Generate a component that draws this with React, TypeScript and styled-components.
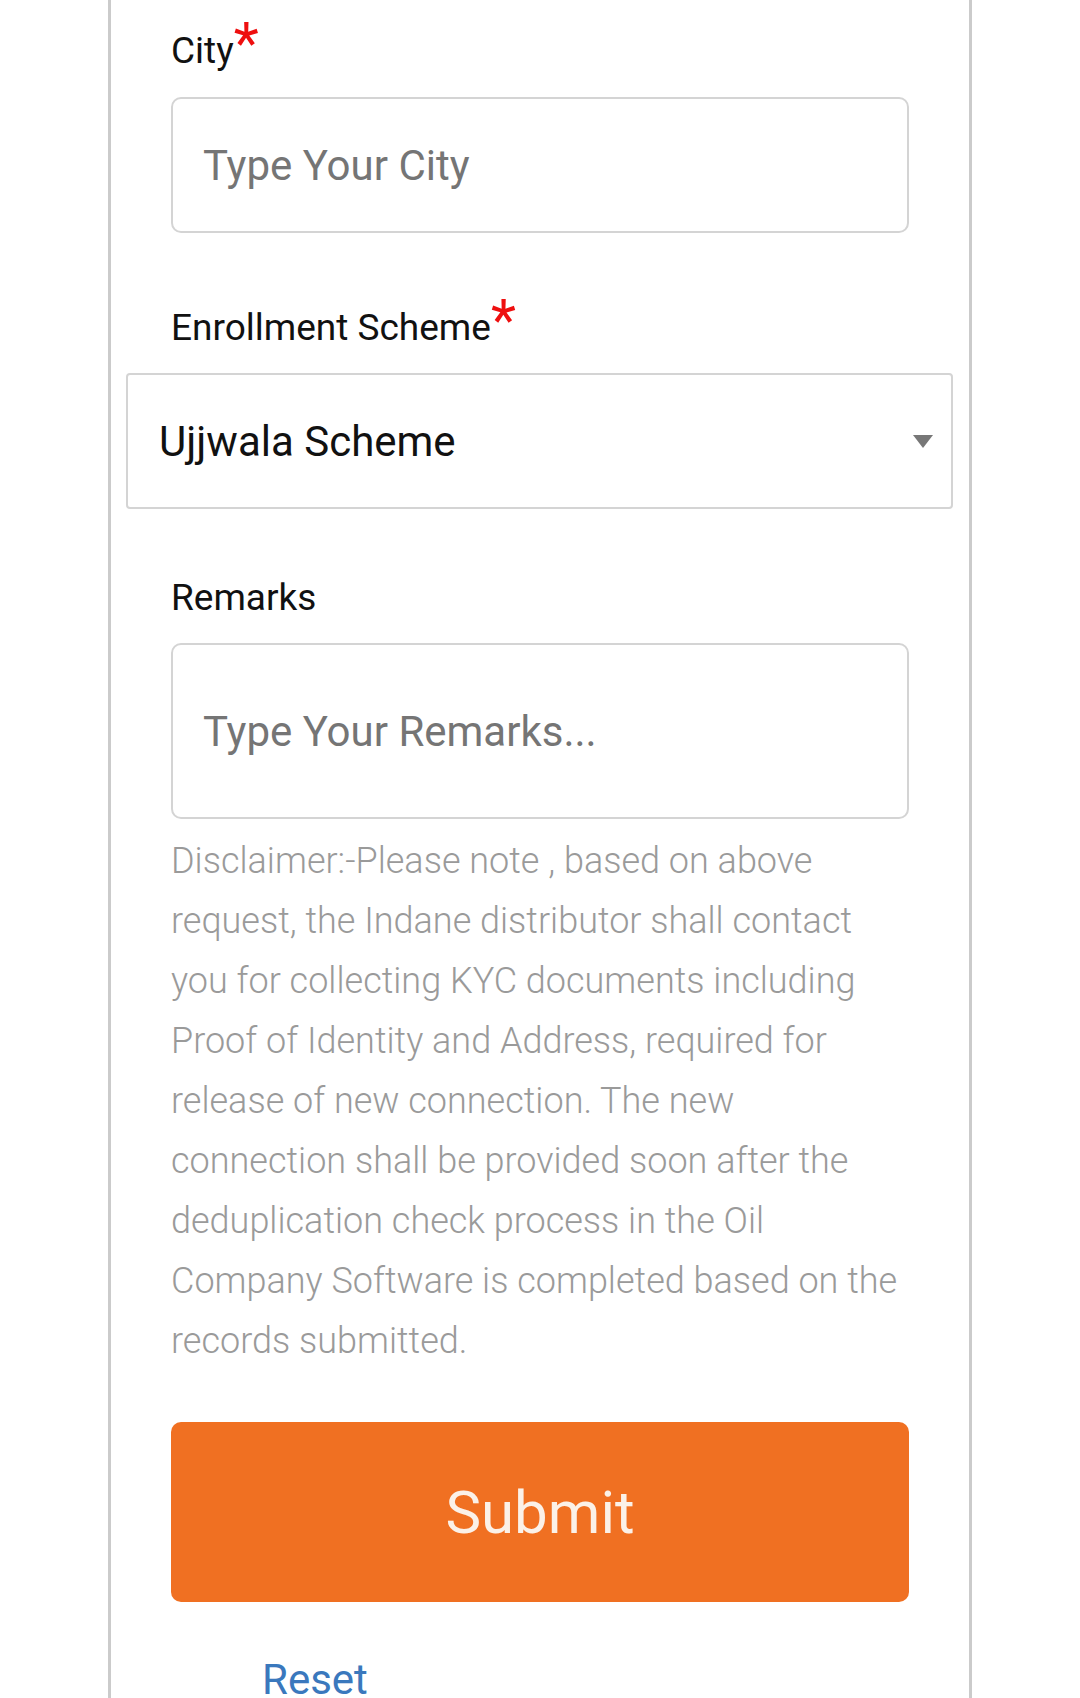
import styled, { createGlobalStyle } from "styled-components";

const GlobalStyle = createGlobalStyle`
  html, body {
    margin: 0;
    padding: 0;
    background: #ffffff;
  }
  body {
    font-family: Roboto, "Noto Sans", Arial, sans-serif;
    color: #111111;
  }
  * {
    box-sizing: border-box;
  }
`;

const Page = styled.div`
  width: 1080px;
  height: 1698px;
  overflow: hidden;
  background: #ffffff;
`;

const Card = styled.form`
  margin-left: 108px;
  width: 864px;
  min-height: 1698px;
  border-left: 3px solid #cbcbcb;
  border-right: 3px solid #cbcbcb;
  padding: 30px 60px 0;
  display: flex;
  flex-direction: column;
`;

const Label = styled.label<{ gap?: number }>`
  display: block;
  font-size: 37px;
  line-height: 42px;
  font-weight: 400;
  color: #111111;
  margin-top: ${(p) => p.gap ?? 0}px;
`;

const Star = styled.span`
  color: #ee0f0f;
  font-size: 58px;
  line-height: 0;
`;

const TextInput = styled.input<{ tall?: boolean }>`
  display: block;
  width: 100%;
  height: ${(p) => (p.tall ? 176 : 136)}px;
  margin-top: ${(p) => (p.tall ? 24 : 25)}px;
  padding: 0 30px;
  border: 2px solid #d4d4d4;
  border-radius: 10px;
  background: #ffffff;
  font-family: Roboto, "Noto Sans", Arial, sans-serif;
  font-size: 42px;
  color: #222222;
  outline: none;

  &::placeholder {
    color: #757575;
  }
`;

const SelectBox = styled.div`
  margin: 24px -44px 0 -45px;
  height: 136px;
  border: 2px solid #d4d4d4;
  border-radius: 4px;
  padding: 0 18px 0 31px;
  display: flex;
  align-items: center;
  justify-content: space-between;
  font-size: 42px;
  color: #111111;
`;

const Disclaimer = styled.p`
  margin: 12px 0 0;
  font-size: 36px;
  line-height: 60px;
  font-weight: 300;
  color: #9a9a9a;
`;

const SubmitButton = styled.button`
  margin-top: 51px;
  height: 180px;
  width: 100%;
  border: none;
  border-radius: 10px;
  background: #f07022;
  color: #fbf1e8;
  font-family: Roboto, "Noto Sans", Arial, sans-serif;
  font-size: 60px;
  font-weight: 400;
  cursor: pointer;
`;

const ResetLink = styled.a`
  display: block;
  margin: 54px 0 0 91px;
  font-size: 42px;
  line-height: 47px;
  color: #3a78bd;
  text-decoration: none;
`;

const Caret = () => (
  <svg width="20" height="13" viewBox="0 0 20 13">
    <polygon points="0,0 20,0 10,13" fill="#777777" />
  </svg>
);

export default function App() {
  return (
    <Page>
      <GlobalStyle />
      <Card onSubmit={(e) => e.preventDefault()}>
        <Label>
          City<Star>*</Star>
        </Label>
        <TextInput type="text" placeholder="Type Your City" />

        <Label gap={74}>
          Enrollment Scheme<Star>*</Star>
        </Label>
        <SelectBox>
          <span>Ujjwala Scheme</span>
          <Caret />
        </SelectBox>

        <Label gap={68}>Remarks</Label>
        <TextInput tall type="text" placeholder="Type Your Remarks..." />

        <Disclaimer>
          Disclaimer:-Please note , based on above request, the Indane
          distributor shall contact you for collecting KYC documents including
          Proof of Identity and Address, required for release of new
          connection. The new connection shall be provided soon after the
          deduplication check process in the Oil Company Software is completed
          based on the records submitted.
        </Disclaimer>

        <SubmitButton type="submit">Submit</SubmitButton>
        <ResetLink href="#">Reset</ResetLink>
      </Card>
    </Page>
  );
}
